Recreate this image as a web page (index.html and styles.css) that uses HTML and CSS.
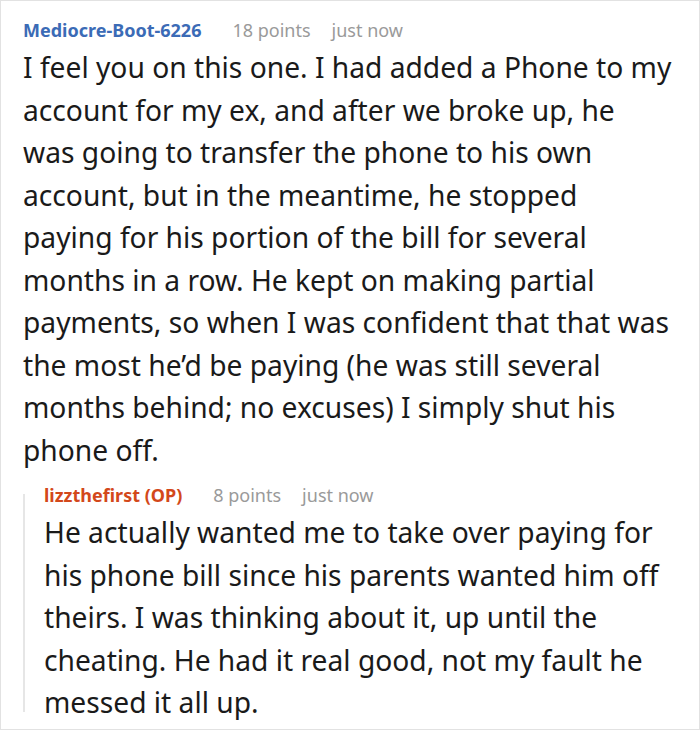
FILE: index.html
```html
<!DOCTYPE html>
<html lang="en">
<head>
<meta charset="utf-8">
<link rel="stylesheet" href="styles.css">
</head>
<body>
<div class="frame">
  <div class="comment">
    <div class="meta">
      <span class="user">Mediocre-Boot-6226</span>
      <span class="points">18 points</span>
      <span class="time">just now</span>
    </div>
    <p class="text">I feel you on this one. I had added a Phone to my<br>account for my ex, and after we broke up, he<br>was going to transfer the phone to his own<br>account, but in the meantime, he stopped<br>paying for his portion of the bill for several<br>months in a row. He kept on making partial<br>payments, so when I was confident that that was<br>the most he’d be paying (he was still several<br>months behind; no excuses) I simply shut his<br>phone off.</p>
    <div class="reply">
      <div class="meta">
        <span class="user op">lizzthefirst (OP)</span>
        <span class="points">8 points</span>
        <span class="time">just now</span>
      </div>
      <p class="text">He actually wanted me to take over paying for<br>his phone bill since his parents wanted him off<br>theirs. I was thinking about it, up until the<br>cheating. He had it real good, not my fault he<br>messed it all up.</p>
    </div>
  </div>
</div>
</body>
</html>
```
FILE: styles.css
```css
html, body {
  margin: 0;
  padding: 0;
  background: #ffffff;
}
.frame {
  width: 700px;
  height: 730px;
  box-sizing: border-box;
  border: 1px solid #e2e2e2;
  background: #ffffff;
  font-family: "Noto Sans", "Open Sans", sans-serif;
  overflow: hidden;
}
.comment {
  padding: 16px 10px 0 22px;
}
.meta {
  display: flex;
  align-items: baseline;
  font-size: 18px;
  line-height: 26px;
  white-space: nowrap;
}
.user {
  font-weight: 700;
  color: #3b6bb6;
}
.user.op {
  color: #d3481a;
}
.points {
  color: #9a9a9a;
  margin-left: 31px;
}
.time {
  color: #9a9a9a;
  margin-left: 21px;
}
.text {
  margin: 3px 0 0;
  font-size: 28.2px;
  line-height: 42.5px;
  color: #1a1a1a;
  white-space: nowrap;
}
.reply {
  position: relative;
  margin-top: 11px;
  padding-left: 21px;
}
.reply::before {
  content: "";
  position: absolute;
  left: 0;
  top: 12px;
  bottom: 12px;
  width: 2px;
  background: #e6e6e6;
}
```
